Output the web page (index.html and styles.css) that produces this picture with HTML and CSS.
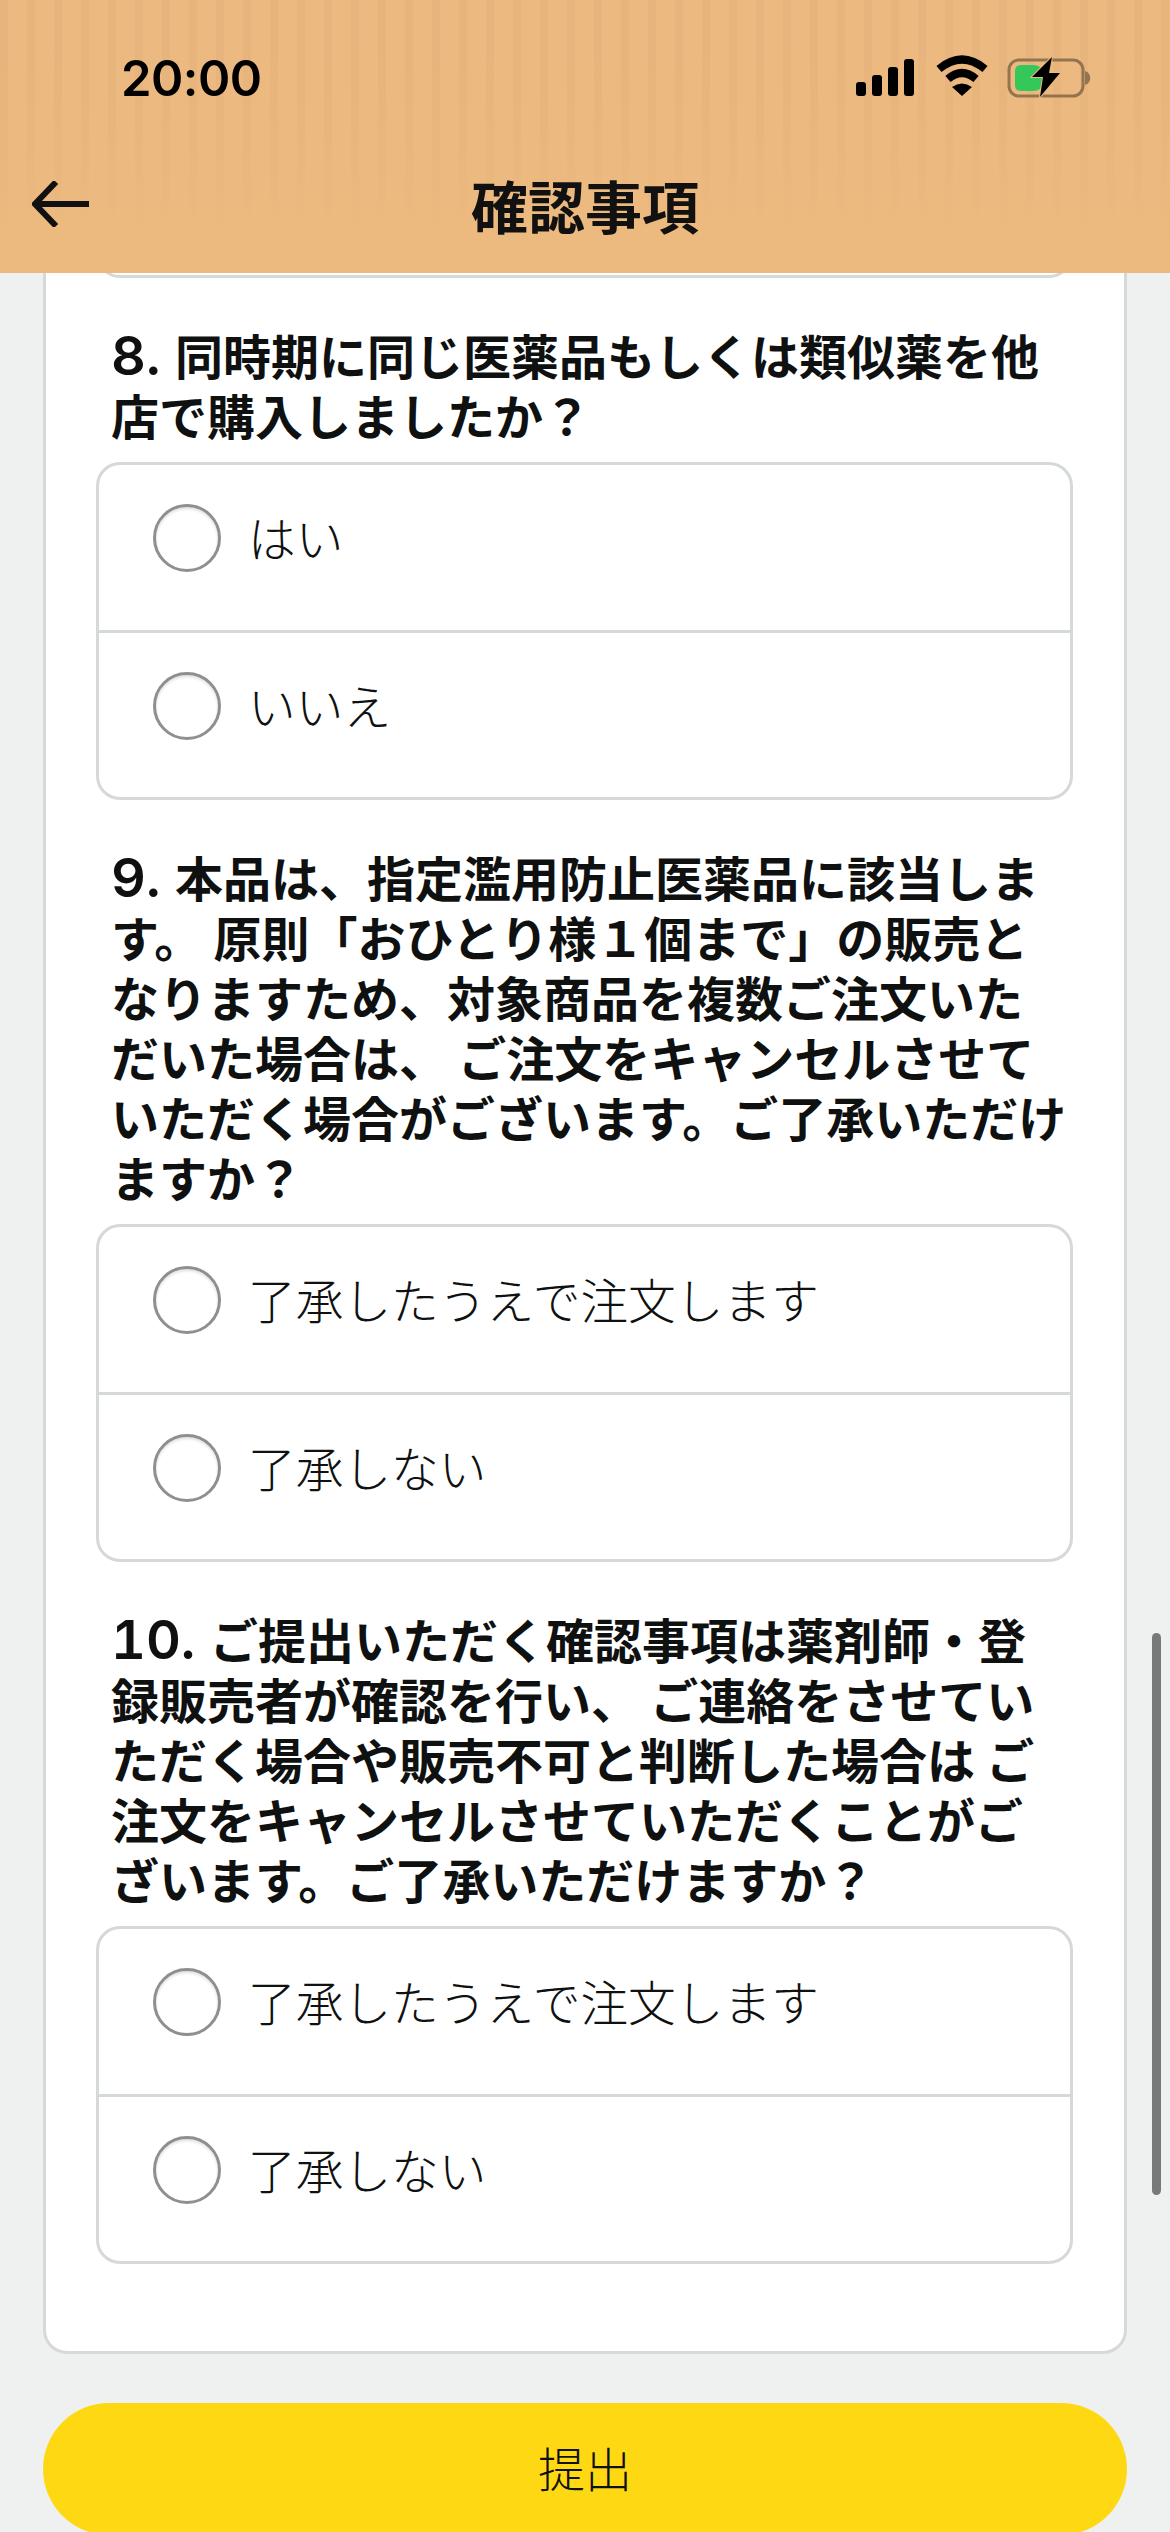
FILE: index.html
```html
<!DOCTYPE html>
<html lang="ja">
<head>
  <meta charset="UTF-8" />
  <meta name="viewport" content="width=device-width, initial-scale=1.0"/>
  <title>確認事項</title>
  <link rel="stylesheet" href="styles.css">
</head>
<body>
  <header class="top">
    <div class="status">
      <span class="clock">20:00</span>
      <svg class="status-icons" viewBox="0 0 236 38" width="236" height="38">
        <rect x="1" y="23" width="10" height="14" rx="3"/>
        <rect x="17" y="16" width="10" height="21" rx="3"/>
        <rect x="33" y="8" width="10" height="29" rx="3"/>
        <rect x="49" y="0" width="10" height="37" rx="3"/>
        <path d="M84 10 Q107 -9 130 10" class="wifi"/>
        <path d="M93 20 Q107 8 121 20" class="wifi"/>
        <path d="M107 37 L97 28 Q107 21 117 28 Z"/>
        <rect x="154" y="1" width="74" height="36" rx="10" class="batt"/>
        <path d="M230 12 C237 14 237 24 230 26 Z" class="batt-tip"/>
        <path d="M160 12 Q160 6 166 6 L178 6 Q187 6 187 13 L187 25 Q187 32 178 32 L166 32 Q160 32 160 26 Z" class="batt-fill"/>
        <path d="M197 -2 L177 18 L188 18 L185 38 L205 14 L194 14 Z" class="bolt"/>
      </svg>
    </div>
    <div class="nav">
      <svg class="back" viewBox="0 0 58 46" width="58" height="46">
        <path d="M24 1 L3 23 L24 45 M3 23 L57 23"/>
      </svg>
      <h1>確認事項</h1>
    </div>
  </header>

  <main class="page">
    <section class="card">
      <div class="options stub"></div>

      <h2 class="question"><span class="num">8. </span>同時期に同じ医薬品もしくは類似薬を他<br>店で購入しましたか？</h2>
      <div class="options">
        <div class="option"><span class="radio"></span><span class="label">はい</span></div>
        <div class="option"><span class="radio"></span><span class="label">いいえ</span></div>
      </div>

      <h2 class="question"><span class="num">9. </span>本品は、指定濫用防止医薬品に該当しま<br>す。 原則「おひとり様１個まで」の販売と<br>なりますため、対象商品を複数ご注文いた<br>だいた場合は、 ご注文をキャンセルさせて<br>いただく場合がございます。ご了承いただけ<br>ますか？</h2>
      <div class="options">
        <div class="option"><span class="radio"></span><span class="label">了承したうえで注文します</span></div>
        <div class="option"><span class="radio"></span><span class="label">了承しない</span></div>
      </div>

      <h2 class="question"><span class="num">10. </span>ご提出いただく確認事項は薬剤師・登<br>録販売者が確認を行い、 ご連絡をさせてい<br>ただく場合や販売不可と判断した場合は ご<br>注文をキャンセルさせていただくことがご<br>ざいます。ご了承いただけますか？</h2>
      <div class="options">
        <div class="option"><span class="radio"></span><span class="label">了承したうえで注文します</span></div>
        <div class="option"><span class="radio"></span><span class="label">了承しない</span></div>
      </div>
    </section>

    <button class="submit">提出</button>
  </main>

  <div class="scrollbar"></div>
</body>
</html>
```

FILE: styles.css
```css
html, body {
  margin: 0;
  height: 2532px;
  overflow: hidden;
}

body {
  position: relative;
  background-color: #eff1f1;
  color: #0f1111;
  font-family: "Noto Sans CJK JP", sans-serif;
}

.top {
  position: relative;
  z-index: 2;
  height: 273px;
  background-color: #ecb97f;
  background-image:
    linear-gradient(to bottom, rgba(236, 185, 127, 0) 0, rgba(236, 185, 127, 0) 40px, #ecb97f 240px),
    repeating-linear-gradient(to right, #e6b47c 0, #e6b47c 8px, #ecba81 8px, #ecba81 27px);
}

.status {
  display: flex;
  justify-content: space-between;
  align-items: flex-start;
  height: 170px;
  padding: 59px 79px 0 121px;
  box-sizing: border-box;
}

.clock {
  margin-top: 1px;
  font-family: Inter, sans-serif;
  font-size: 49px;
  font-weight: 600;
  line-height: 38px;
  letter-spacing: -0.5px;
  color: #000;
}

.status-icons {
  display: block;
  overflow: visible;
  fill: #000;
}

.wifi {
  fill: none;
  stroke: #000;
  stroke-width: 8;
}

.batt {
  fill: none;
  stroke: #94744f;
  stroke-width: 3;
}

.batt-tip {
  fill: #94744f;
}

.batt-fill {
  fill: #34c759;
}

.bolt {
  fill: #000;
  stroke: #ecb97f;
  stroke-width: 2;
  paint-order: stroke;
}

.nav {
  position: relative;
  text-align: center;
}

.nav h1 {
  margin: 0;
  font-size: 57px;
  font-weight: 700;
  line-height: 68px;
  color: #111;
}

.back {
  position: absolute;
  left: 32px;
  top: 11px;
  fill: none;
  stroke: #111;
  stroke-width: 6;
}

.page {
  padding: 0 43px;
}

.card {
  margin-top: -30px;
  padding: 0 51px 0 50px;
  background: #fff;
  border: 3px solid #d5d9d9;
  border-radius: 24px;
  box-sizing: border-box;
  height: 2111px;
}

.options {
  border: 3px solid #d5d9d9;
  border-radius: 24px;
  margin-bottom: 50px;
}

.options.stub {
  height: 29px;
  border-top: none;
  border-radius: 0 0 24px 24px;
}

.question {
  margin: 0 0 14px;
  padding-left: 15px;
  font-family: Inter, "Noto Sans CJK JP", sans-serif;
  font-size: 48px;
  font-weight: 700;
  line-height: 60px;
  white-space: nowrap;
}

.num {
  font-size: 54px;
  font-weight: 600;
  font-variant-numeric: tabular-nums;
  line-height: 1;
}

.option {
  display: flex;
  align-items: flex-start;
  gap: 27px;
  height: 165px;
  padding: 39px 0 0 54px;
  box-sizing: border-box;
}

.option + .option {
  border-top: 3px solid #d5d9d9;
  height: 167px;
}

.radio {
  flex: none;
  width: 68px;
  height: 68px;
  border: 3px solid #8d9090;
  border-radius: 50%;
  box-sizing: border-box;
  background: #fff;
  box-shadow: inset 0 2px 3px rgba(0, 0, 0, 0.12);
}

.label {
  font-size: 47.7px;
  font-weight: 300;
  line-height: 65px;
}

.submit {
  display: block;
  width: 100%;
  height: 132px;
  margin-top: 49px;
  padding: 0 0 6px;
  border: none;
  border-radius: 66px;
  background-color: #ffd814;
  color: #0f1111;
  font-family: inherit;
  font-size: 47px;
  font-weight: 300;
}

.scrollbar {
  position: absolute;
  left: 1152px;
  top: 1633px;
  width: 9px;
  height: 562px;
  border-radius: 5px;
  background-color: #777a7a;
}
```
